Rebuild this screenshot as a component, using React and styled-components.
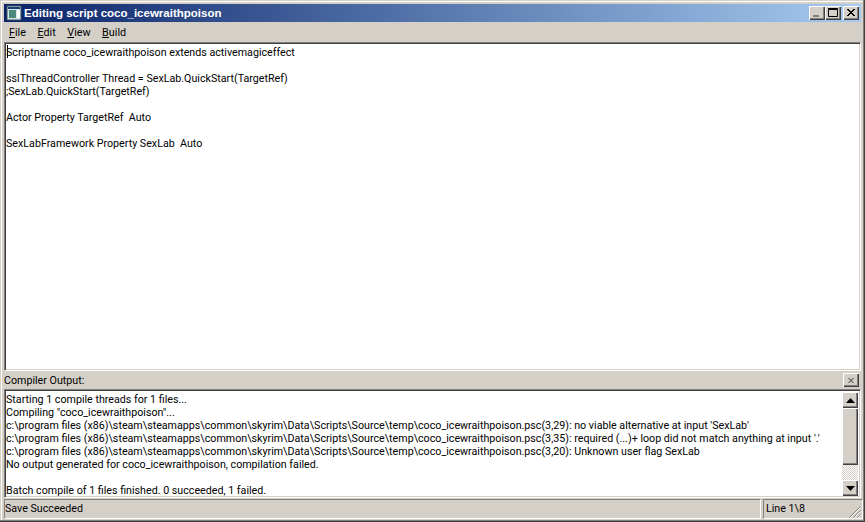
import React from 'react';
import styled, { createGlobalStyle } from 'styled-components';

const Global = createGlobalStyle`
  html, body { margin: 0; padding: 0; background: #d4d0c8; }
  body { font-family: Roboto, "Liberation Sans", sans-serif; font-size: 11px; color: #000; }
`;

const Frame = styled.div`
  width: 865px; height: 522px; box-sizing: border-box; overflow: hidden;
  display: flex; flex-direction: column;
  background: #d4d0c8; padding: 4px 2px 2px 4px;
  box-shadow: inset -1px -1px 0 #404040, inset -2px -2px 0 #808080, inset 1px 1px 0 #d4d0c8, inset 2px 2px 0 #fff;
`;
const TitleBar = styled.div`
  height: 18px; flex: none; margin-right: 2px; display: flex; align-items: center; padding: 0 2px 0 2px;
  background: linear-gradient(90deg, #0a246a, #a6caf0);
`;
const AppIcon = styled.svg`width: 16px; height: 16px; flex: none; margin-right: 2px;`;
const Title = styled.div`
  color: #fff; font-family: "Liberation Sans", sans-serif; font-weight: 700; font-size: 11.5px; flex: 1; line-height: 18px; white-space: nowrap;
`;
const CapButton = styled.button`
  width: 16px; height: 14px; padding: 0; margin: 0; box-sizing: border-box; border: 0; background: #d4d0c8;
  display: flex; align-items: center; justify-content: center; flex: none;
  margin-left: ${p => (p.$gap ? '2px' : '0')};
  box-shadow: inset 1px 1px 0 #fff, inset -1px -1px 0 #404040, inset -2px -2px 0 #808080;
`;
const CapIcon = styled.svg`width: 16px; height: 14px; display: block;`;
const MenuBar = styled.div`height: 20px; flex: none; display: flex; align-items: center; padding: 1px 0 0 5px; box-sizing: border-box; gap: 11.5px; margin-right: 2px;`;
const MenuItem = styled.span`line-height: 19px; font-size: 10.8px; u { text-decoration: underline; }`;
const Sunken = styled.div`
  box-sizing: border-box; background: #fff;
  border: 1px solid; border-color: #808080 #fff #fff #808080;
  box-shadow: inset 1px 1px 0 #404040, inset -1px -1px 0 #d4d0c8;
`;
const Editor = styled(Sunken)`
  flex: 1; min-height: 0; margin-right: 2px; padding: 3px 1px; position: relative;
`;
const Line = styled.div`
  height: 13px; line-height: 13px; font-size: 10.7px; white-space: pre;
`;
const Caret = styled.div`position: absolute; left: 2px; top: 2px; width: 1px; height: 13px; background: #000;`;
const PanelHead = styled.div`
  height: 18px; flex: none; display: flex; align-items: center; justify-content: space-between; margin-right: 2px;
`;
const PanelLabel = styled.span`font-size: 10.7px; line-height: 18px; padding-top: 1px;`;
const CloseMini = styled(CapButton)`margin-right: 2px; height: 14px;`;
const OutputWrap = styled(Sunken)`
  height: 109px; flex: none; display: flex; margin-right: 2px;
`;
const OutputText = styled.div`flex: 1; min-width: 0; padding: 3px 1px 0 1px;`;
const Scroll = styled.div`
  width: 16px; flex: none; display: flex; flex-direction: column; margin: 2px 2px 1px 0;
  background: repeating-conic-gradient(#fff 0 25%, #d4d0c8 0 50%) 0 0 / 2px 2px;
`;
const ScrollBtn = styled.div`
  width: 16px; height: 16px; flex: none; background: #d4d0c8; box-sizing: border-box;
  display: flex; align-items: center; justify-content: center;
  box-shadow: inset 1px 1px 0 #fff, inset -1px -1px 0 #404040, inset -2px -2px 0 #808080;
`;
const Thumb = styled(ScrollBtn)`height: 57px;`;
const Spacer = styled.div`flex: 1;`;
const Tri = styled.svg`width: 9px; height: 5px; display: block;`;
const StatusBar = styled.div`
  height: 21px; flex: none; margin-top: 1px; display: flex; gap: 2px;
`;
const StatusCell = styled.div`
  box-sizing: border-box; height: 20px; line-height: 18px; font-size: 10.7px;
  border: 1px solid; border-color: #808080 #fff #fff #808080;
  flex: ${p => (p.$grow ? 1 : 'none')};
  width: ${p => (p.$grow ? 'auto' : '100px')};
  padding-left: ${p => (p.$grow ? '0' : '2px')};
  position: relative;
`;
const Grip = styled.svg`position: absolute; right: 1px; bottom: 0; width: 13px; height: 13px;`;

const code = [
  'Scriptname coco_icewraithpoison extends activemagiceffect', '',
  'sslThreadController Thread = SexLab.QuickStart(TargetRef)',
  ';SexLab.QuickStart(TargetRef)', '',
  'Actor Property TargetRef  Auto', '',
  'SexLabFramework Property SexLab  Auto',
];
const output = [
  'Starting 1 compile threads for 1 files...',
  'Compiling "coco_icewraithpoison"...',
  "c:\\program files (x86)\\steam\\steamapps\\common\\skyrim\\Data\\Scripts\\Source\\temp\\coco_icewraithpoison.psc(3,29): no viable alternative at input 'SexLab'",
  "c:\\program files (x86)\\steam\\steamapps\\common\\skyrim\\Data\\Scripts\\Source\\temp\\coco_icewraithpoison.psc(3,35): required (...)+ loop did not match anything at input '.'",
  'c:\\program files (x86)\\steam\\steamapps\\common\\skyrim\\Data\\Scripts\\Source\\temp\\coco_icewraithpoison.psc(3,20): Unknown user flag SexLab',
  'No output generated for coco_icewraithpoison, compilation failed.',
  '',
  'Batch compile of 1 files finished. 0 succeeded, 1 failed.',
];

const X = () => (
  <CapIcon viewBox="0 0 16 14"><path d="M4 3l7 7M5 3l7 7M11 3l-7 7M12 3l-7 7" stroke="#000" strokeWidth="1" fill="none" /></CapIcon>
);

export default function App() {
  return (
    <>
      <Global />
      <Frame>
        <TitleBar>
          <AppIcon viewBox="0 0 16 16">
            <rect x="1" y="1" width="14" height="14" fill="#d4e4ec" stroke="#3a4a5a" />
            <rect x="2" y="2" width="12" height="2" fill="#16406e" />
            <rect x="3" y="5" width="7" height="8" fill="#4e8a7c" />
            <rect x="11" y="5" width="3" height="8" fill="#fff" />
          </AppIcon>
          <Title>Editing script coco_icewraithpoison</Title>
          <CapButton><CapIcon viewBox="0 0 16 14"><rect x="4" y="9" width="6" height="2" fill="#808080" /></CapIcon></CapButton>
          <CapButton><CapIcon viewBox="0 0 16 14"><path d="M3.5 3.5h9v7h-9z M3 2.5h10" stroke="#000" fill="none" /></CapIcon></CapButton>
          <CapButton $gap><X /></CapButton>
        </TitleBar>
        <MenuBar>
          <MenuItem><u>F</u>ile</MenuItem>
          <MenuItem><u>E</u>dit</MenuItem>
          <MenuItem><u>V</u>iew</MenuItem>
          <MenuItem><u>B</u>uild</MenuItem>
        </MenuBar>
        <Editor>
          <Caret />
          {code.map((l, i) => <Line key={i}>{l}</Line>)}
        </Editor>
        <PanelHead>
          <PanelLabel>Compiler Output:</PanelLabel>
          <CloseMini><CapIcon viewBox="0 0 16 14"><path d="M5.5 5l5 5M10.5 5l-5 5" stroke="#333" fill="none" /></CapIcon></CloseMini>
        </PanelHead>
        <OutputWrap>
          <OutputText>
            {output.map((l, i) => <Line key={i}>{l}</Line>)}
          </OutputText>
          <Scroll>
            <ScrollBtn><Tri viewBox="0 0 9 5"><path d="M4.5 0L9 5H0z" /></Tri></ScrollBtn>
            <Thumb />
            <Spacer />
            <ScrollBtn><Tri viewBox="0 0 9 5"><path d="M0 0h9L4.5 5z" /></Tri></ScrollBtn>
          </Scroll>
        </OutputWrap>
        <StatusBar>
          <StatusCell $grow>Save Succeeded</StatusCell>
          <StatusCell>Line 1\8
            <Grip viewBox="0 0 13 13"><path d="M12.5 1.5l-11 11M12.5 5.5l-7 7M12.5 9.5l-3 3" stroke="#808080" fill="none" /><path d="M12.5 2.5l-10 10M12.5 6.5l-6 6M12.5 10.5l-2 2" stroke="#fff" fill="none" /></Grip>
          </StatusCell>
        </StatusBar>
      </Frame>
    </>
  );
}
